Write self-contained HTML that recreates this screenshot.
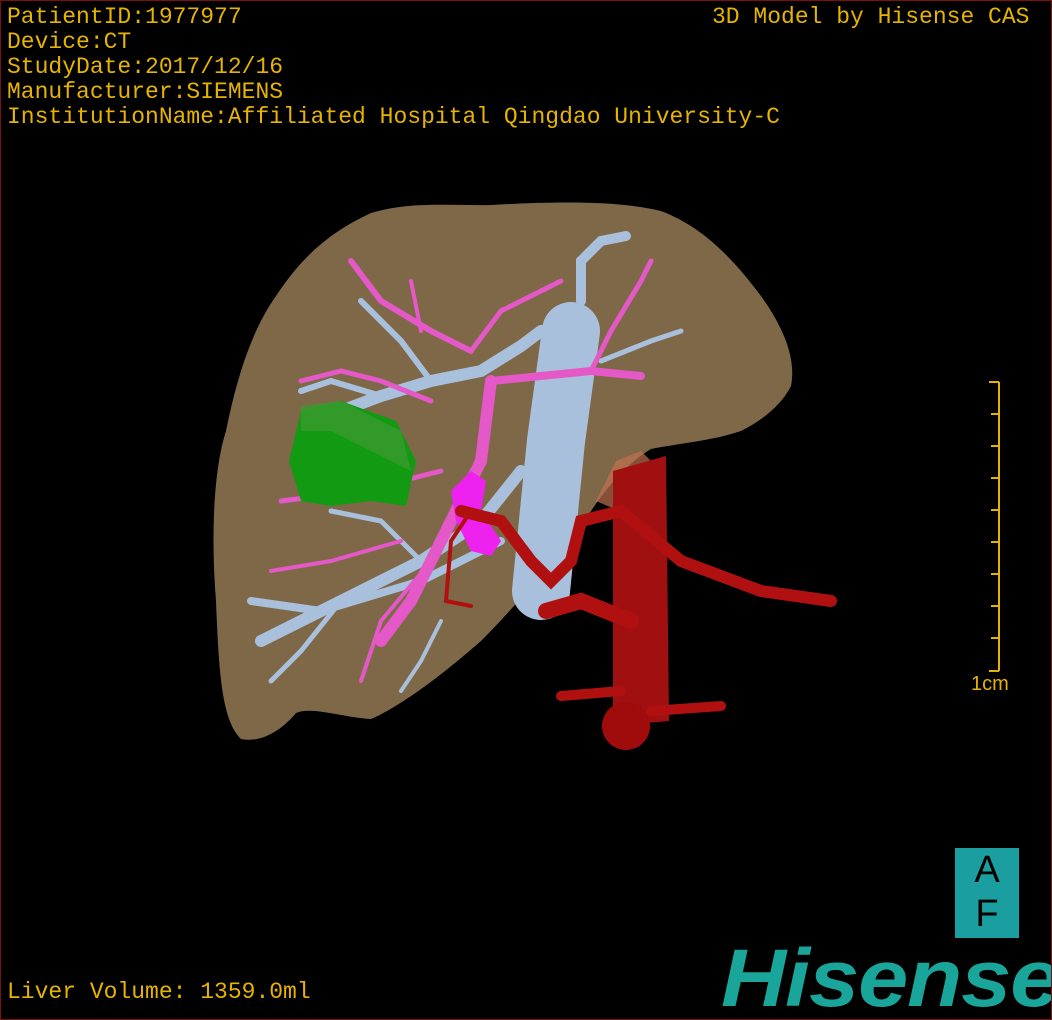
<!DOCTYPE html>
<html><head><meta charset="utf-8"><style>
html,body{margin:0;padding:0;background:#000;}
#f{position:relative;width:1050px;height:1018px;border:1px solid #7a1010;background:#000;overflow:hidden;font-family:"Liberation Sans",sans-serif;}
.t{position:absolute;color:#e6b400;font-family:"Liberation Mono",monospace;font-size:23px;line-height:25px;white-space:nowrap;}
</style></head><body><div id="f">
<svg width="1050" height="1018" style="position:absolute;left:0;top:0">
<path d="M215,600 C210,540 212,470 225,430 C235,380 250,330 275,295 C295,265 320,235 370,212 C410,200 450,205 490,204 C560,200 620,200 660,210 C700,225 730,255 760,295 C785,330 795,360 790,385 C780,405 760,420 740,430 C710,440 680,442 650,448 C630,460 610,480 590,510 C560,550 520,600 480,640 C440,675 400,705 370,718 C340,716 310,705 295,712 C280,730 260,742 240,738 C222,720 218,680 215,600 Z" fill="#7f6848"/>
<path d="M640,450 L615,460 L595,500 L630,515 L660,470 Z" fill="#c07050" opacity="0.7"/>
<g stroke="#a9c0dc" fill="none" stroke-linecap="round">
<path d="M570,330 L555,440 L540,590" stroke-width="58"/>
<path d="M540,330 L520,345 L480,370 L430,380 L380,395 L340,410" stroke-width="12"/>
<path d="M580,300 L580,260 L600,240 L625,235" stroke-width="10"/>
<path d="M520,470 L480,520 L420,560 L340,600 L260,640" stroke-width="12"/>
<path d="M500,540 L420,580 L320,610 L250,600" stroke-width="8"/>
<path d="M430,380 L400,340 L360,300" stroke-width="6"/>
<path d="M380,395 L330,380 L300,390" stroke-width="6"/>
<path d="M420,560 L380,520 L330,510" stroke-width="5"/>
<path d="M340,600 L300,650 L270,680" stroke-width="5"/>
<path d="M600,360 L650,340 L680,330" stroke-width="5"/>
<path d="M440,620 L420,660 L400,690" stroke-width="4"/>
</g>
<g stroke="#e458c8" fill="none" stroke-linecap="round">
<path d="M490,380 L480,460 L440,540 L410,600 L380,640" stroke-width="12"/>
<path d="M490,380 L540,375 L590,370 L640,375" stroke-width="8"/>
<path d="M470,350 L430,330 L380,300 L350,260" stroke-width="6"/>
<path d="M470,350 L500,310 L540,290 L560,280" stroke-width="5"/>
<path d="M590,370 L610,330 L640,280 L650,260" stroke-width="5"/>
<path d="M430,400 L380,380 L340,370 L300,380" stroke-width="5"/>
<path d="M440,470 L360,490 L280,500" stroke-width="5"/>
<path d="M400,540 L330,560 L270,570" stroke-width="4"/>
<path d="M430,560 L380,620 L360,680" stroke-width="4"/>
<path d="M410,280 L420,330" stroke-width="4"/>
</g>
<path d="M300,410 L340,400 L395,420 L415,460 L405,505 L370,500 L330,505 L300,500 L288,460 Z" fill="#129a12"/>
<path d="M300,405 L340,400 L400,430 L410,470 L380,455 L330,430 L300,430 Z" fill="#3a9a30" opacity="0.8"/>
<path d="M470,470 L485,480 L480,510 L500,540 L490,555 L470,550 L455,520 L450,490 Z" fill="#ee22ee"/>
<path d="M612,470 L665,455 L668,720 L612,725 Z" fill="#a01010"/>
<g stroke="#b01010" fill="none" stroke-linecap="round">
<path d="M460,510 L500,520 L530,560 L550,580 L570,560 L580,520 L620,510 L680,560 L760,590 L830,600" stroke-width="12"/>
<path d="M630,620 L580,600 L545,610" stroke-width="16"/>
<path d="M620,690 L560,695" stroke-width="10"/>
<path d="M650,710 L720,705" stroke-width="10"/>
<path d="M470,510 L450,540 L445,600 L470,605" stroke-width="4"/>
</g>
<circle cx="625" cy="725" r="24" fill="#a00c0c"/>
<g stroke="#e6b400" stroke-width="2">
<line x1="998" y1="381" x2="998" y2="670"/>
<line x1="988" y1="381" x2="998" y2="381"/><line x1="990" y1="413" x2="998" y2="413"/><line x1="990" y1="445" x2="998" y2="445"/><line x1="990" y1="477" x2="998" y2="477"/><line x1="990" y1="509" x2="998" y2="509"/><line x1="990" y1="541" x2="998" y2="541"/><line x1="990" y1="573" x2="998" y2="573"/><line x1="990" y1="605" x2="998" y2="605"/><line x1="990" y1="637" x2="998" y2="637"/><line x1="988" y1="670" x2="998" y2="670"/>
</g>
</svg>
<div class="t" style="left:6px;top:4px">PatientID:1977977<br>Device:CT<br>StudyDate:2017/12/16<br>Manufacturer:SIEMENS<br>InstitutionName:Affiliated Hospital Qingdao University-C</div>
<div class="t" style="left:711px;top:4px">3D Model by Hisense CAS</div>
<div class="t" style="left:970px;top:671px;font-family:'Liberation Sans',sans-serif;font-size:20px">1cm</div>
<div class="t" style="left:6px;top:979px">Liver Volume: 1359.0ml</div>
<div style="position:absolute;left:954px;top:847px;width:64px;height:90px;background:#1a9ea0;color:#000;font-size:38px;text-align:center;line-height:44px;font-family:'Liberation Sans',sans-serif">A<br>F</div>
<div style="position:absolute;left:720px;top:938px;font-family:'Liberation Sans',sans-serif;font-weight:bold;font-style:italic;font-size:82px;line-height:80px;color:#1aa59a;letter-spacing:-1px;transform:scaleX(1.1);transform-origin:left top">Hisense</div>
</div></body></html>
